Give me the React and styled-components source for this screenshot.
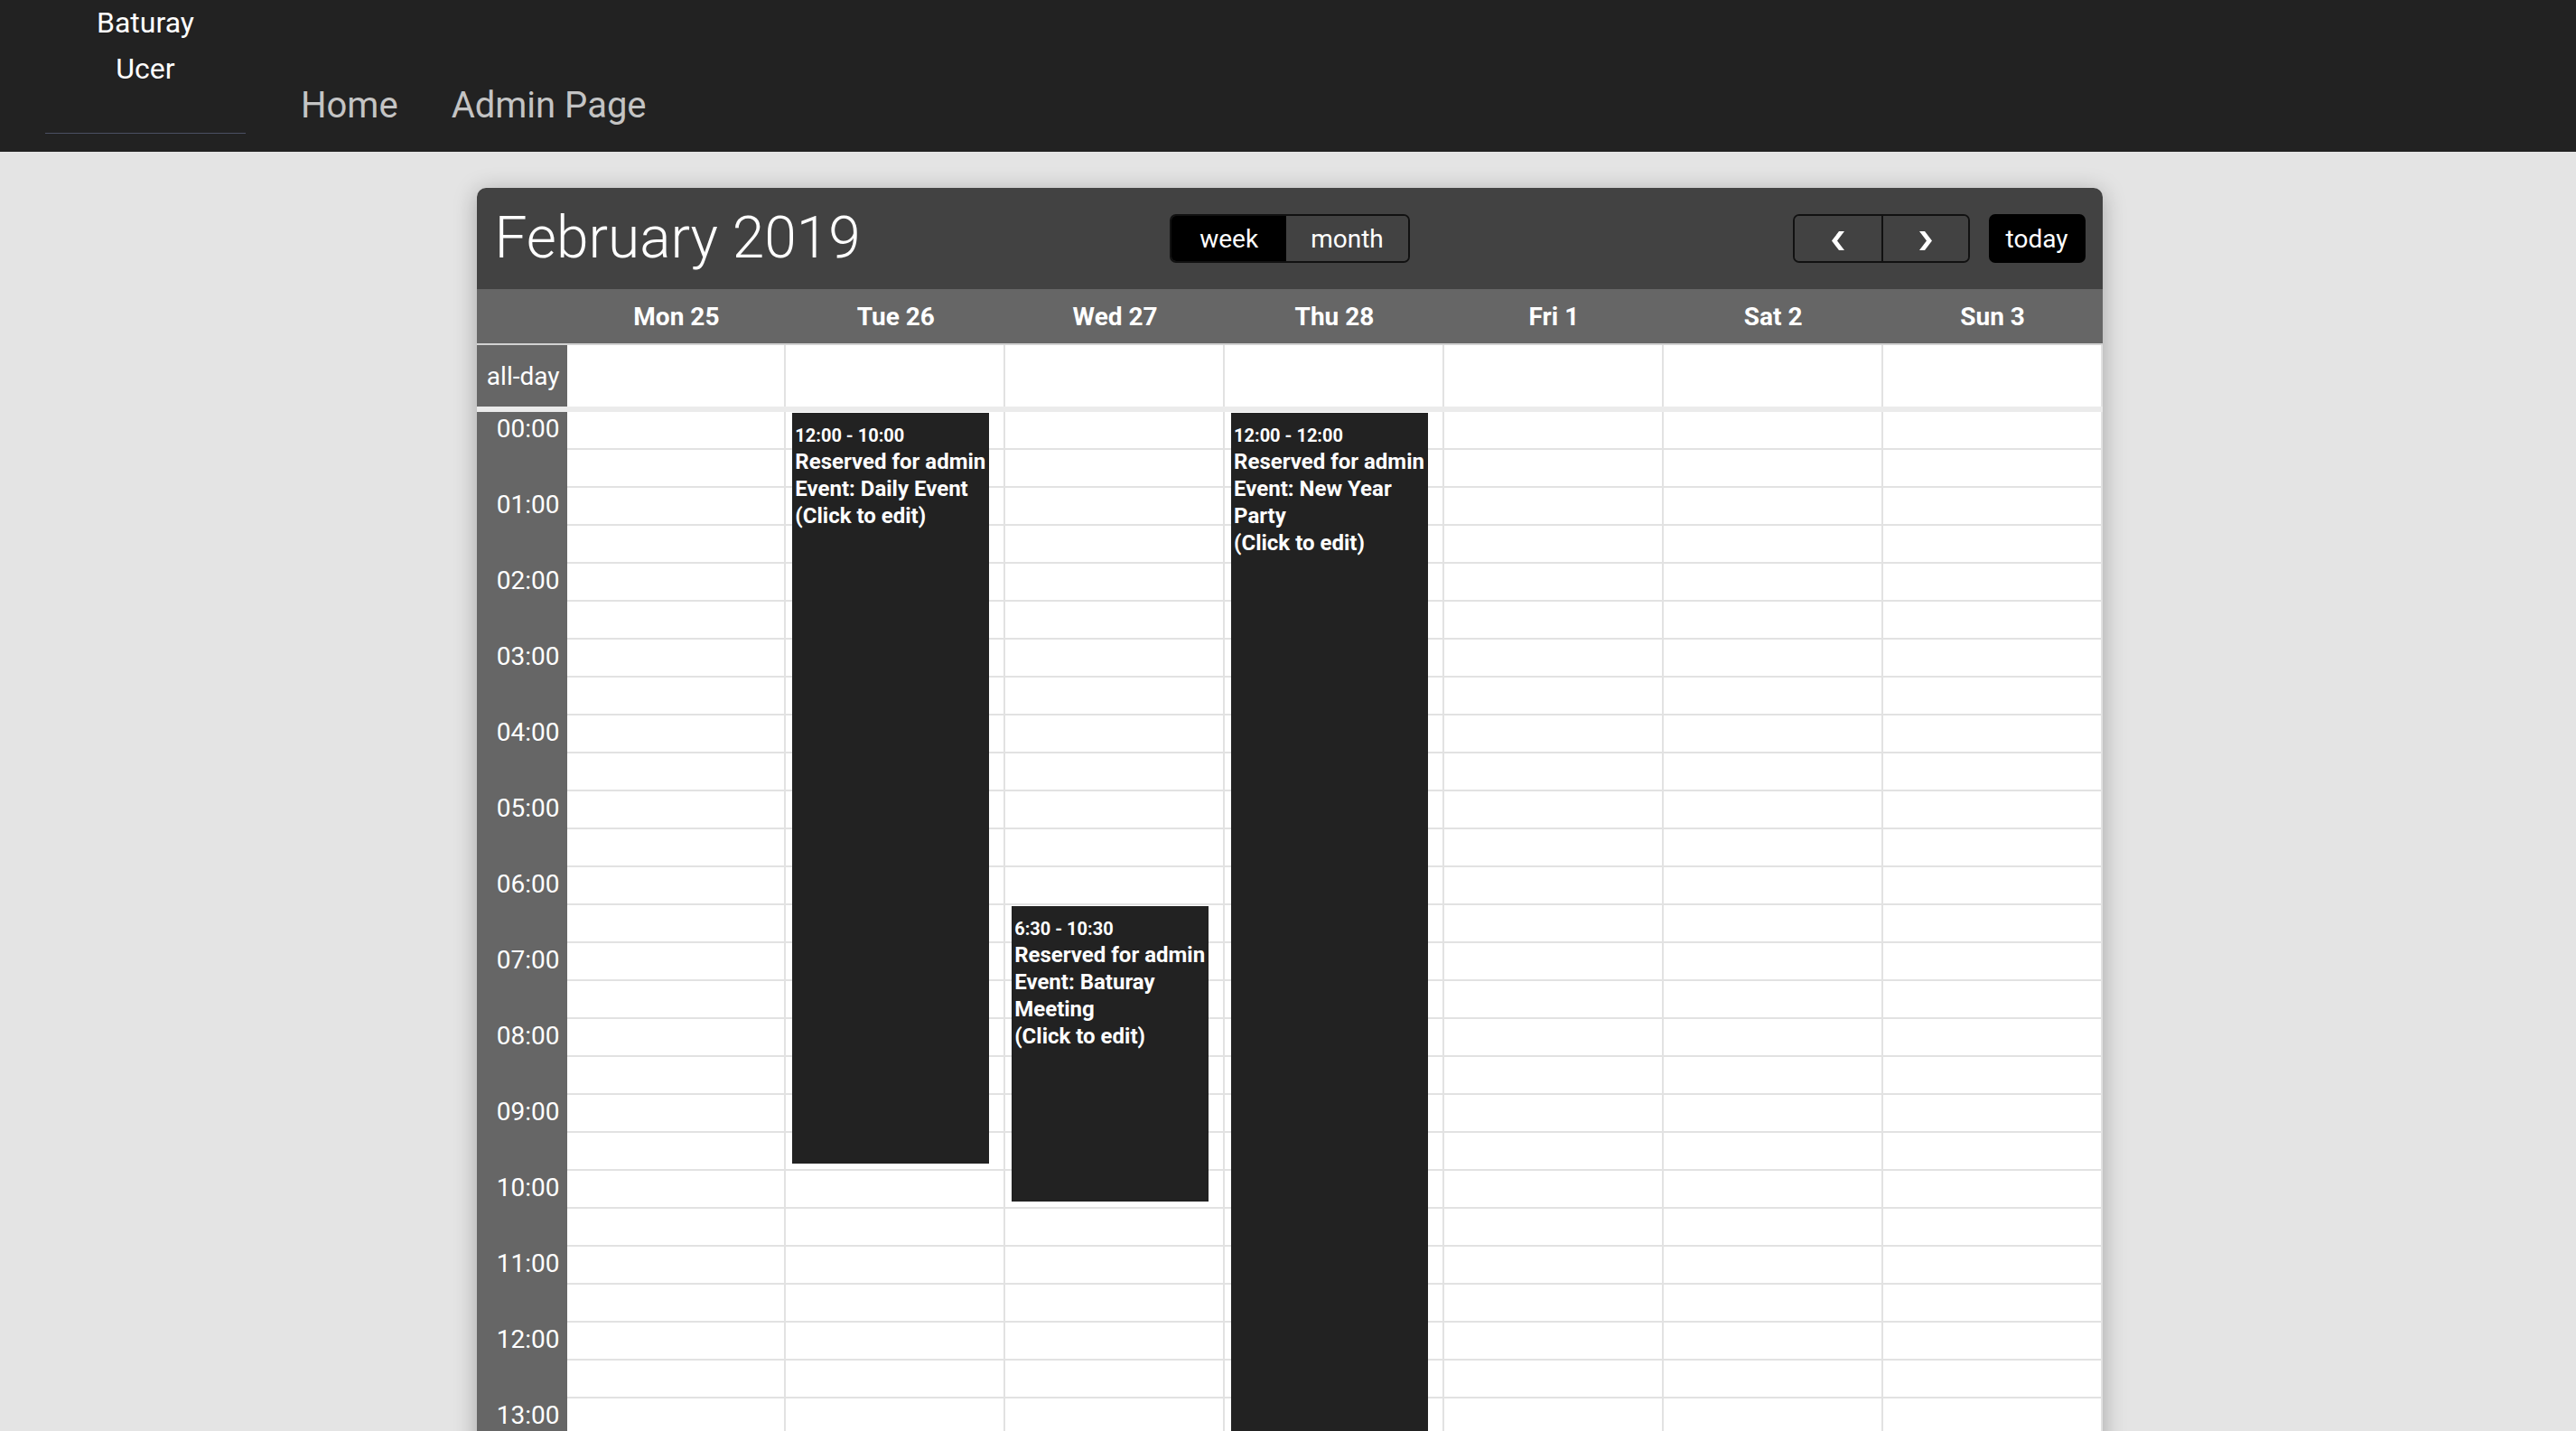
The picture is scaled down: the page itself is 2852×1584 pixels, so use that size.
import React from "react";
import styled, { createGlobalStyle } from "styled-components";

const GlobalStyle = createGlobalStyle`
  html, body {
    margin: 0;
    padding: 0;
    height: 100%;
    overflow: hidden;
  }
  body {
    background: #e4e4e4;
    font-family: Roboto, "Noto Sans", "Liberation Sans", sans-serif;
  }
  * {
    box-sizing: border-box;
  }
`;

const days = ["Mon 25", "Tue 26", "Wed 27", "Thu 28", "Fri 1", "Sat 2", "Sun 3"];

const events = [
  {
    day: 1,
    start: 0,
    end: 10,
    time: "12:00 - 10:00",
    lines: ["Reserved for admin", "Event: Daily Event", "(Click to edit)"],
  },
  {
    day: 2,
    start: 6.5,
    end: 10.5,
    time: "6:30 - 10:30",
    lines: ["Reserved for admin", "Event: Baturay Meeting", "(Click to edit)"],
  },
  {
    day: 3,
    start: 0,
    end: 24,
    time: "12:00 - 12:00",
    lines: ["Reserved for admin", "Event: New Year Party", "(Click to edit)"],
  },
];

const HOUR = 84;
const hours = Array.from({ length: 24 }, (_, i) => i);

function pad(n) {
  return n < 10 ? "0" + n : "" + n;
}

function Chevron({ dir }) {
  const points =
    dir === "left"
      ? "8,0 14,0 6,10.5 14,21 8,21 0,10.5"
      : "0,0 6,0 14,10.5 6,21 0,21 8,10.5";
  return (
    <svg width="14" height="21" viewBox="0 0 14 21">
      <polygon points={points} fill="#fff" />
    </svg>
  );
}

export default function App() {
  return (
    <>
      <GlobalStyle />
      <Navbar>
        <Brand>
          Baturay
          <br />
          Ucer
        </Brand>
        <NavList>
          <NavLink>Home</NavLink>
          <NavLink>Admin Page</NavLink>
        </NavList>
      </Navbar>

      <Main>
        <Card>
          <Toolbar>
            <Title>February 2019</Title>
            <ButtonGroup>
              <ToolButton active>week</ToolButton>
              <ToolButton>month</ToolButton>
            </ButtonGroup>
            <RightTools>
              <ButtonGroup>
                <NavButton>
                  <Chevron dir="left" />
                </NavButton>
                <NavButton>
                  <Chevron dir="right" />
                </NavButton>
              </ButtonGroup>
              <TodayButton>today</TodayButton>
            </RightTools>
          </Toolbar>

          <DayHeadRow>
            <span />
            {days.map((d) => (
              <DayHead key={d}>{d}</DayHead>
            ))}
          </DayHeadRow>

          <AllDayRow>
            <AxisCell>all-day</AxisCell>
            {days.map((d) => (
              <DayCell key={d} />
            ))}
          </AllDayRow>
          <Divider />

          <TimeGrid>
            <Axis>
              {hours.map((h) => (
                <React.Fragment key={h}>
                  <AxisSlot>{pad(h)}:00</AxisSlot>
                  <AxisSlot />
                </React.Fragment>
              ))}
            </Axis>
            {days.map((d, i) => (
              <DayColumn key={d}>
                {hours.map((h) => (
                  <React.Fragment key={h}>
                    <Slot />
                    <Slot />
                  </React.Fragment>
                ))}
                {events
                  .filter((e) => e.day === i)
                  .map((e) => (
                    <Event
                      key={e.time}
                      style={{
                        top: e.start * HOUR + 1,
                        height: (e.end - e.start) * HOUR - 9,
                      }}
                    >
                      <EventTime>{e.time}</EventTime>
                      {e.lines.map((l) => (
                        <EventLine key={l}>{l}</EventLine>
                      ))}
                    </Event>
                  ))}
              </DayColumn>
            ))}
          </TimeGrid>
        </Card>
      </Main>
    </>
  );
}

const Navbar = styled.header`
  height: 168px;
  background: #222222;
  display: flex;
  align-items: flex-start;
`;

const Brand = styled.div`
  margin-left: 50px;
  width: 222px;
  height: 148px;
  border-bottom: 1px solid #4b5063;
  text-align: center;
  color: #ffffff;
  font-size: 32px;
  line-height: 51px;
`;

const NavList = styled.nav`
  display: flex;
  gap: 59px;
  margin-left: 61px;
  margin-top: 92px;
`;

const NavLink = styled.a`
  color: #c4c4c4;
  font-size: 40px;
  line-height: 49px;
  cursor: pointer;
`;

const Main = styled.main`
  padding: 40px 0 0 3px;
`;

const Card = styled.div`
  width: 1800px;
  margin: 0 auto;
  border-radius: 10px 10px 0 0;
  box-shadow: 0 4px 26px rgba(0, 0, 0, 0.28);
  background: #ffffff;
`;

const Toolbar = styled.div`
  height: 112px;
  background: #424242;
  border-radius: 10px 10px 0 0;
  padding: 0 19px 0 20px;
  display: grid;
  grid-template-columns: 1fr auto 1fr;
  align-items: center;
`;

const Title = styled.h2`
  margin: 0;
  color: #ffffff;
  font-size: 64px;
  font-weight: 300;
  line-height: 1;
`;

const ButtonGroup = styled.div`
  display: flex;
  height: 54px;
  border: 2px solid #111111;
  border-radius: 7px;
  overflow: hidden;
`;

const ToolButton = styled.button`
  border: none;
  margin: 0;
  padding: 0 ${(p) => (p.active ? "31px" : "27px")};
  background: ${(p) => (p.active ? "#000000" : "#424242")};
  color: #ffffff;
  font-family: inherit;
  font-size: 28px;
  cursor: pointer;
`;

const RightTools = styled.div`
  justify-self: end;
  display: flex;
  align-items: center;
  gap: 21px;
`;

const NavButton = styled.button`
  width: 96px;
  border: none;
  margin: 0;
  padding: 4px 0 0;
  background: #424242;
  display: flex;
  align-items: center;
  justify-content: center;
  cursor: pointer;

  & + & {
    border-left: 2px solid #111111;
  }
`;

const TodayButton = styled.button`
  height: 54px;
  border: none;
  border-radius: 7px;
  padding: 0 19px;
  background: #000000;
  color: #ffffff;
  font-family: inherit;
  font-size: 28px;
  cursor: pointer;
`;

const Columns = styled.div`
  display: grid;
  grid-template-columns: 100px repeat(7, 1fr);
`;

const DayHeadRow = styled(Columns)`
  height: 62px;
  background: #666666;
  border-bottom: 2px solid #d2d2d2;
`;

const DayHead = styled.div`
  color: #ffffff;
  font-size: 28px;
  font-weight: 700;
  display: flex;
  align-items: center;
  justify-content: center;
`;

const AllDayRow = styled(Columns)`
  height: 68px;
`;

const AxisCell = styled.div`
  background: #666666;
  color: #ffffff;
  font-size: 28px;
  display: flex;
  align-items: center;
  justify-content: flex-end;
  padding-right: 8px;
`;

const DayCell = styled.div`
  background: #ffffff;
  border-right: 2px solid #e2e2e2;
`;

const Divider = styled.div`
  height: 6px;
  background: #ebebeb;
`;

const TimeGrid = styled(Columns)``;

const Axis = styled.div`
  background: #666666;
`;

const AxisSlot = styled.div`
  height: 42px;
  padding: 3px 8px 0 0;
  text-align: right;
  color: #ffffff;
  font-size: 28px;
  line-height: 32px;
`;

const DayColumn = styled.div`
  position: relative;
  background: #ffffff;
  border-right: 2px solid #e2e2e2;
`;

const Slot = styled.div`
  height: 42px;
  border-bottom: 2px solid #e2e2e2;
`;

const Event = styled.div`
  position: absolute;
  left: 7px;
  right: 16px;
  background: #222222;
  color: #ffffff;
  padding: 12px 3px 0;
  overflow: hidden;
  font-weight: 700;
`;

const EventTime = styled.div`
  font-size: 20px;
  line-height: 27px;
  white-space: nowrap;
`;

const EventLine = styled.div`
  font-size: 24px;
  line-height: 30px;
`;
